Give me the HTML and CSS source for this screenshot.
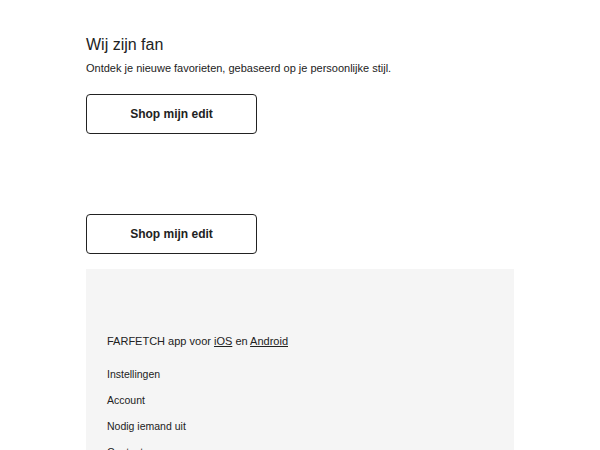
FILE: index.html
```html
<!DOCTYPE html>
<html lang="nl">
<head>
<meta charset="utf-8">
<title>Wij zijn fan</title>
<link rel="stylesheet" href="styles.css">
</head>
<body>
<main class="page">
  <section class="intro">
    <h1 class="title">Wij zijn fan</h1>
    <p class="subtitle">Ontdek je nieuwe favorieten, gebaseerd op je persoonlijke stijl.</p>
    <a class="btn" href="#">Shop mijn edit</a>
  </section>
  <section class="second">
    <a class="btn" href="#">Shop mijn edit</a>
  </section>
  <footer class="footer">
    <p class="app">FARFETCH app voor <a href="#">iOS</a> en <a href="#">Android</a></p>
    <ul class="links">
      <li>Instellingen</li>
      <li>Account</li>
      <li>Nodig iemand uit</li>
      <li>Contact</li>
    </ul>
  </footer>
</main>
</body>
</html>
```

FILE: styles.css
```css
* { box-sizing: border-box; }
html, body { margin: 0; padding: 0; background: #fff; }
body {
  font-family: "Liberation Sans", Arial, sans-serif;
  color: #222;
}
.page {
  width: 428px;
  margin: 0 auto;
  padding-top: 34px;
}
.title {
  margin: 0;
  font-size: 16px;
  font-weight: 400;
  line-height: 22px;
}
.subtitle {
  margin: 4px 0 0;
  font-size: 11px;
  line-height: 16px;
}
.btn {
  display: flex;
  align-items: center;
  justify-content: center;
  width: 171px;
  height: 40px;
  border: 1px solid #222;
  border-radius: 4px;
  color: #222;
  text-decoration: none;
  font-weight: 700;
  font-size: 12px;
}
.intro .btn { margin-top: 18px; }
.second { padding-top: 80px; }
.footer {
  margin-top: 15px;
  background: #f5f5f5;
  padding: 64px 21px 20px;
  font-size: 11px;
  line-height: 16px;
  color: #222;
}
.app { margin: 0; }
.app a { color: #222; text-decoration: underline; }
.links {
  list-style: none;
  margin: 17px 0 0;
  padding: 0;
  display: flex;
  flex-direction: column;
  gap: 10px;
  font-size: 10.5px;
}
```
